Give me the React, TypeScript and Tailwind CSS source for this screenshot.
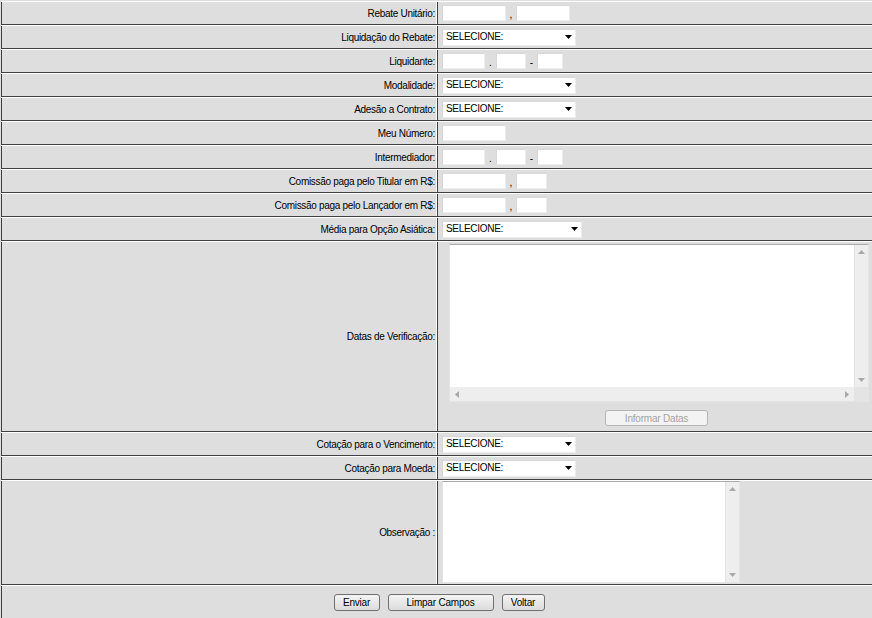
import React from "react";

const font = { fontFamily: '"Liberation Sans", Arial, sans-serif' };

function Label({ children }: { children: React.ReactNode }) {
  return (
    <div className="w-[436px] shrink-0 border-l border-l-[#404040] border-r border-r-white flex items-center justify-end pr-px text-[10px] tracking-[-0.3px] text-black whitespace-nowrap">
      {children}
    </div>
  );
}

function Row({
  label,
  h,
  children,
  field = "flex items-center pl-[4px]",
}: {
  label: string;
  h: string;
  children: React.ReactNode;
  field?: string;
}) {
  return (
    <div className={`flex border-t border-t-white border-b border-b-[#404040] ${h}`}>
      <Label>{label}</Label>
      <div className={`flex-1 border-l border-l-[#404040] ${field}`}>{children}</div>
    </div>
  );
}

function Input({ w }: { w: string }) {
  return <div className={`${w} h-[16px] bg-white border border-[#d6d6d6] border-r-[#ececec] border-b-[#ececec]`} />;
}

function Sep({ c, w }: { c: string; w: string }) {
  return <div className={`${w} text-center text-[10px] leading-[16px] pt-[3px] text-black`}>{c}</div>;
}

function Select({ w = "w-[134px]" }: { w?: string }) {
  return (
    <div className={`${w} h-[17px] bg-white border border-[#d6d6d6] border-r-[#ececec] border-b-[#ececec] flex items-center justify-between pl-[3px] pr-[3px]`}>
      <span className="text-[10px] tracking-[-0.3px] text-black leading-none">SELECIONE:</span>
      <svg width="7" height="4" viewBox="0 0 7 4">
        <polygon points="0,0 7,0 3.5,4" fill="#000" />
      </svg>
    </div>
  );
}

function Tri({ dir }: { dir: "up" | "down" | "left" | "right" }) {
  const pts = {
    up: "0,4 7,4 3.5,0",
    down: "0,0 7,0 3.5,4",
    left: "4,0 4,7 0,3.5",
    right: "0,0 0,7 4,3.5",
  }[dir];
  const vert = dir === "up" || dir === "down";
  return (
    <svg width={vert ? 7 : 4} height={vert ? 4 : 7} viewBox={vert ? "0 0 7 4" : "0 0 4 7"}>
      <polygon points={pts} fill="#a8a8a8" />
    </svg>
  );
}

function Button({ w, children, disabled }: { w: string; children: React.ReactNode; disabled?: boolean }) {
  return (
    <div
      className={`${w} flex items-center justify-center rounded-[3px] text-[10px] tracking-[-0.2px] ${
        disabled
          ? "h-[16px] border border-[#b5b5b5] bg-[#f3f3f3] text-[#a3a3a3]"
          : "h-[17px] border border-[#707070] bg-linear-to-b from-[#f4f4f4] to-[#dcdcdc] text-black"
      }`}
    >
      {children}
    </div>
  );
}

export default function App() {
  return (
    <div className="w-[872px] h-[618px] bg-[#dedede] pt-px pl-px overflow-hidden" style={font}>
      <Row label="Rebate Unitário:" h="h-[24px]">
        <Input w="w-[64px]" />
        <Sep c="," w="w-[10px]" />
        <Input w="w-[54px]" />
      </Row>
      <Row label="Liquidação do Rebate:" h="h-[24px]">
        <Select />
      </Row>
      <Row label="Liquidante:" h="h-[24px]">
        <Input w="w-[43px]" />
        <Sep c="." w="w-[11px]" />
        <Input w="w-[30px]" />
        <Sep c="-" w="w-[11px]" />
        <Input w="w-[26px]" />
      </Row>
      <Row label="Modalidade:" h="h-[24px]">
        <Select />
      </Row>
      <Row label="Adesão a Contrato:" h="h-[24px]">
        <Select />
      </Row>
      <Row label="Meu Número:" h="h-[24px]">
        <Input w="w-[64px]" />
      </Row>
      <Row label="Intermediador:" h="h-[24px]">
        <Input w="w-[43px]" />
        <Sep c="." w="w-[11px]" />
        <Input w="w-[30px]" />
        <Sep c="-" w="w-[11px]" />
        <Input w="w-[26px]" />
      </Row>
      <Row label="Comissão paga pelo Titular em R$:" h="h-[24px]">
        <Input w="w-[64px]" />
        <Sep c="," w="w-[10px]" />
        <Input w="w-[31px]" />
      </Row>
      <Row label="Comissão paga pelo Lançador em R$:" h="h-[24px]">
        <Input w="w-[64px]" />
        <Sep c="," w="w-[10px]" />
        <Input w="w-[31px]" />
      </Row>
      <Row label="Média para Opção Asiática:" h="h-[24px]">
        <Select w="w-[140px]" />
      </Row>
      <Row label="Datas de Verificação:" h="h-[191px]" field="flex flex-col pl-[11px] pt-[2px]">
        <div className="w-[420px] h-[158px] border border-[#e4e4e4] border-t-[#a9a9a9] bg-[#ececec] grid grid-cols-[1fr_14px] grid-rows-[1fr_14px]">
          <div className="bg-white" />
          <div className="bg-[#eeeeee] border-l border-l-[#e2e2e2] flex flex-col items-center justify-between py-[5px]">
            <Tri dir="up" />
            <Tri dir="down" />
          </div>
          <div className="bg-[#eeeeee] flex items-center justify-between px-[5px]">
            <Tri dir="left" />
            <Tri dir="right" />
          </div>
          <div className="bg-[#e4e4e4]" />
        </div>
        <div className="w-[415px] flex justify-center mt-[8px]">
          <Button w="w-[103px]" disabled>
            Informar Datas
          </Button>
        </div>
      </Row>
      <Row label="Cotação para o Vencimento:" h="h-[24px]">
        <Select />
      </Row>
      <Row label="Cotação para Moeda:" h="h-[24px]">
        <Select />
      </Row>
      <Row label="Observação :" h="h-[105px]" field="flex items-start pl-[4px]">
        <div className="w-[298px] h-[102px] border border-[#e4e4e4] border-t-[#a9a9a9] flex">
          <div className="flex-1 bg-white" />
          <div className="w-[14px] bg-[#eeeeee] border-l border-l-[#e2e2e2] flex flex-col items-center justify-between py-[5px]">
            <Tri dir="up" />
            <Tri dir="down" />
          </div>
        </div>
      </Row>
      <div className="flex border-t border-t-white h-[40px]">
        <div className="flex-1 border-l border-l-[#404040] flex justify-center items-start gap-[8px] pt-[8px] pl-[4px]">
          <Button w="w-[46px]">Enviar</Button>
          <Button w="w-[106px]">Limpar Campos</Button>
          <Button w="w-[43px]">Voltar</Button>
        </div>
      </div>
    </div>
  );
}
